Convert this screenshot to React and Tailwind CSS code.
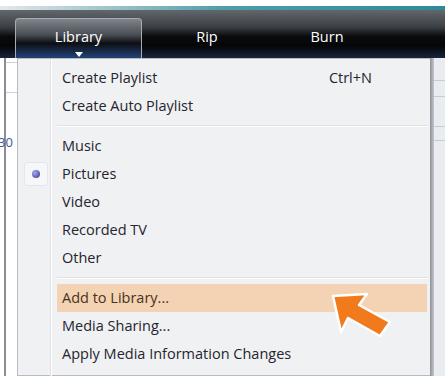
import React from 'react';

const font = { fontFamily: '"Open Sans", "Noto Sans", sans-serif' };

function Item({ label, shortcut, active, checked }) {
  return (
    <div className="relative flex h-[28px] items-center whitespace-nowrap">
      {checked && (
        <div className="absolute left-[6px] top-[2px] flex h-[24px] w-[24px] items-center justify-center rounded-[3px] border border-[#e4e6ec] bg-[#f6f7f9]">
          <div className="h-[8px] w-[8px] rounded-full bg-[radial-gradient(circle_at_35%_35%,#a4aaf0,#30338a)]" />
        </div>
      )}
      <div
        className={
          'ml-[39px] mr-[3px] flex h-full flex-1 items-center justify-between pl-[5px] pr-[55px] ' +
          (active ? 'bg-[#f3d3b3] text-[#4a3222]' : 'text-[#26242e]')
        }
      >
        <span>{label}</span>
        {shortcut && <span>{shortcut}</span>}
      </div>
    </div>
  );
}

function Sep({ h }) {
  return (
    <div className={'flex items-center ' + h}>
      <div className="ml-[39px] mr-[3px] flex-1 border-t border-b border-t-[#e0e0e0] border-b-white" />
    </div>
  );
}

export default function App() {
  return (
    <div className="relative h-[376px] w-[445px] overflow-hidden bg-white" style={font}>
      <div className="h-[6px] bg-white" />
      <div className="h-[4px] bg-gradient-to-r from-[#e4e8ea] via-[#4f9ea8] to-[#2e8a98]" />
      {/* toolbar */}
      <div className="flex h-[48px] items-stretch bg-[linear-gradient(to_bottom,#62676d_0%,#3c4045_35%,#0a0b0c_55%,#050608_75%,#17243c_100%)] text-[14.5px] text-white">
        <div className="w-[15px] shrink-0" />
        <div className="relative mt-[8px] flex w-[127px] shrink-0 flex-col items-center rounded-t-[4px] border border-b-0 border-[#a8acb2] bg-[linear-gradient(to_bottom,#80858b_0%,#4a4f55_40%,#0c0e12_62%,#234478_100%)]">
          <span className="mt-[8px] leading-[20px]">Library</span>
          <svg width="8" height="5" viewBox="0 0 8 5" className="mt-[5px]">
            <path d="M0 0 L8 0 L4 5 Z" fill="#ffffff" />
          </svg>
        </div>
        <div className="flex w-[130px] shrink-0 items-center justify-center pt-[6px]">Rip</div>
        <div className="flex w-[110px] shrink-0 items-center justify-center pt-[6px]">Burn</div>
      </div>
      {/* body */}
      <div className="flex h-[318px]">
        <div className="relative w-[17px] shrink-0 bg-white">
          <div className="absolute left-[4px] top-0 h-full w-[2px] bg-[#8a8e94]" />
          <div className="absolute left-[6px] top-[4px] h-px w-[11px] bg-[#c8d4e0]" />
          <div className="absolute left-[6px] top-[34px] h-px w-[11px] bg-[#c8d4e0]" />
          <span className="absolute left-[-2px] top-[75px] text-[13px] text-[#3a5a9a]">30</span>
        </div>
        <div className="w-[413px] shrink-0 border border-r-0 border-[#b8bcc2] bg-[#f0f1f3] pt-[5px] text-[14.5px]">
          <div className="relative">
            <div className="absolute left-[32px] top-[-5px] h-[320px] w-px bg-[#e0e1e4]" />
            <div className="absolute left-[33px] top-[-5px] h-[320px] w-px bg-white" />
            <Item label="Create Playlist" shortcut="Ctrl+N" />
            <Item label="Create Auto Playlist" />
            <Sep h="h-[12px]" />
            <Item label="Music" />
            <Item label="Pictures" checked />
            <Item label="Video" />
            <Item label="Recorded TV" />
            <Item label="Other" />
            <Sep h="h-[12px]" />
            <Item label="Add to Library..." active />
            <Item label="Media Sharing..." />
            <Item label="Apply Media Information Changes" />
          </div>
        </div>
        <div className="w-[4px] shrink-0 bg-gradient-to-r from-[#8e9298] to-[#c4c8ce]" />
        <div className="relative flex-1 bg-[#e9edf2]">
          <div className="absolute left-0 top-[22px] h-px w-full bg-[#c6ccd4]" />
          <div className="absolute left-0 top-[38px] h-px w-full bg-[#c6ccd4]" />
          <div className="absolute left-0 top-[68px] h-px w-full bg-[#c6ccd4]" />
          <div className="absolute left-0 top-[82px] h-px w-full bg-[#c6ccd4]" />
        </div>
      </div>
      {/* orange arrow */}
      <svg className="absolute left-0 top-0" width="445" height="376" viewBox="0 0 445 376">
        <polygon
          points="333,296 367,294 359,305 390,322 380,336 348,318 341,332"
          fill="#f07a1c"
          stroke="#ffffff"
          strokeWidth="2.5"
          strokeLinejoin="round"
        />
      </svg>
    </div>
  );
}
